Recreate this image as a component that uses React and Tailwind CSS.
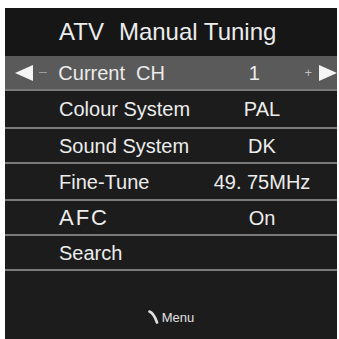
export default function App() {
  const font = { fontFamily: '"Liberation Sans", Arial, sans-serif' };
  const rows = [
    { label: "Colour System", value: "PAL", h: "h-[38px]" },
    { label: "Sound System", value: "DK", h: "h-[35px]" },
    { label: "Fine-Tune", value: "49. 75MHz", h: "h-[37px]" },
    { label: "AFC", value: "On", h: "h-[35px]", wide: true },
    { label: "Search", value: "", h: "h-[35px]" },
  ];
  return (
    <div className="w-[339px] h-[339px] bg-white pt-[8px] pl-[5px] pr-[2px]" style={font}>
      <div className="h-[331px] bg-[#1c1c1c] flex flex-col text-[#ececec]">
        <div className="h-[48px] bg-[#161616] flex items-center pl-[54px] text-[24px] leading-none">
          <span>ATV</span>
          <span className="ml-[15px]">Manual Tuning</span>
        </div>
        <div className="h-[33px] bg-[#5a5a5a] flex items-center">
          <div className="w-[54px] flex items-center pl-[10px] gap-[6px]">
            <svg width="18" height="16" viewBox="0 0 18 16"><polygon points="0,8 18,0 18,16" fill="#f4f4f4" /></svg>
            <div className="w-[8px] h-[1px] bg-[#9a9a9a]" />
          </div>
          <div className="w-[146px] text-[20px] leading-none">Current&nbsp; CH</div>
          <div className="w-[104px] text-center text-[20px] leading-none pl-[2px]">1</div>
          <div className="flex items-center gap-[7px]">
            <span className="text-[13px] text-[#bdbdbd] leading-none">+</span>
            <svg width="18" height="16" viewBox="0 0 18 16"><polygon points="18,8 0,0 0,16" fill="#f4f4f4" /></svg>
          </div>
        </div>
        {rows.map((r) => (
          <div key={r.label} className={`${r.h} border-t-2 border-[#7a7a7a] flex items-center`}>
            <div className={`w-[200px] pl-[54px] leading-none ${r.wide ? "tracking-[2px] text-[22px]" : "text-[20px]"}`}>{r.label}</div>
            <div className="w-[114px] text-center text-[20px] leading-none">{r.value}</div>
          </div>
        ))}
        <div className="flex-1 border-t-2 border-[#7a7a7a] flex items-center justify-center pt-[24px]">
          <svg width="11" height="14" viewBox="0 0 11 14" className="mr-[3px]">
            <path d="M1.5 1.5 Q 6 3.5 9 12.5" stroke="#e0e0e0" strokeWidth="2.6" fill="none" strokeLinecap="round" />
          </svg>
          <span className="text-[13px] text-[#e0e0e0] leading-none">Menu</span>
        </div>
      </div>
    </div>
  );
}
